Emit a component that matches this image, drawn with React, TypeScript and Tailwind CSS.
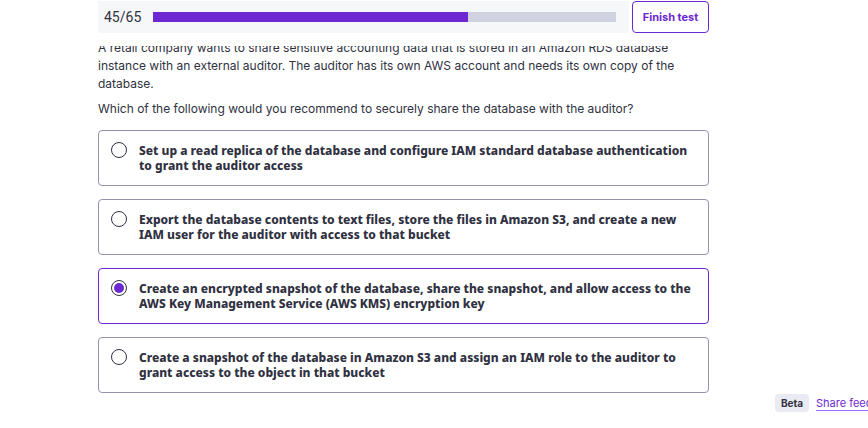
import { useState } from "react";

const TOTAL = 65;
const CURRENT = 45;
const ANSWERED = 44;

const options = [
  "Set up a read replica of the database and configure IAM standard database authentication to grant the auditor access",
  "Export the database contents to text files, store the files in Amazon S3, and create a new IAM user for the auditor with access to that bucket",
  "Create an encrypted snapshot of the database, share the snapshot, and allow access to the AWS Key Management Service (AWS KMS) encryption key",
  "Create a snapshot of the database in Amazon S3 and assign an IAM role to the auditor to grant access to the object in that bucket",
];

function Header() {
  return (
    <header className="flex gap-[3px]">
      <div className="flex h-8 flex-1 items-center bg-[#f6f7f9] pr-[13px] pl-[6px]">
        <span id="progress" className="w-[49px] font-['Roboto',sans-serif] text-sm">
          {CURRENT}/{TOTAL}
        </span>
        <div
          role="progressbar"
          aria-labelledby="progress"
          aria-valuenow={ANSWERED}
          aria-valuemax={TOTAL}
          className="h-[10px] flex-1 bg-[#d1d2e0]"
        >
          <div className="h-full bg-[#6d28d2]" style={{ width: `${Math.round((ANSWERED / TOTAL) * 100)}%` }} />
        </div>
      </div>
      <button
        type="button"
        className="h-8 w-[77px] rounded border border-[#6d28d2] text-[11px] font-bold whitespace-nowrap text-[#6d28d2]"
      >
        Finish test
      </button>
    </header>
  );
}

export default function App() {
  const [selected, setSelected] = useState(2);

  return (
    <div className="flex min-h-screen bg-white pt-px pl-[98px] font-['Inter',sans-serif] text-[#303141]">
      <main className="min-w-0 flex-1">
        <Header />
        <section className="mt-[13px] overflow-hidden">
          <div className="-mt-[7px] text-[12px] leading-[18px]">
            <p>
              A retail company wants to share sensitive accounting data that is stored in an Amazon RDS database
              instance with an external auditor. The auditor has its own AWS account and needs its own copy of the
              database.
            </p>
            <p id="question" className="mt-[7px]">
              Which of the following would you recommend to securely share the database with the auditor?
            </p>
          </div>
          <div role="radiogroup" aria-labelledby="question" className="mt-3 flex flex-col gap-[13px]">
            {options.map((text, i) => (
              <label
                key={text}
                className={`flex cursor-pointer gap-3 rounded border px-3 py-[11px] ${
                  selected === i ? "border-[#6d28d2]" : "border-[#9194ac]"
                }`}
              >
                <input
                  type="radio"
                  name="answer"
                  checked={selected === i}
                  onChange={() => setSelected(i)}
                  className="grid size-4 shrink-0 appearance-none place-items-center rounded-full border border-[#303141] before:size-[10px] before:rounded-full checked:before:bg-[#6d28d2]"
                />
                <span className="py-px font-['Noto_Sans',sans-serif] text-[12px] leading-[15px] font-extrabold">
                  {text}
                </span>
              </label>
            ))}
          </div>
        </section>
      </main>
      <aside className="flex w-[159px] shrink-0 items-center gap-[7px] self-end overflow-hidden pb-4 pl-[66px] whitespace-nowrap">
        <span className="flex h-[18px] w-[34px] shrink-0 items-center justify-center rounded-sm bg-[#e9eaf2] text-[10px] font-bold">
          Beta
        </span>
        <a href="#feedback" className="border-b border-[#a66eff] text-[11px] leading-[14px] text-[#6d28d2]">
          Share feedback
        </a>
      </aside>
    </div>
  );
}
